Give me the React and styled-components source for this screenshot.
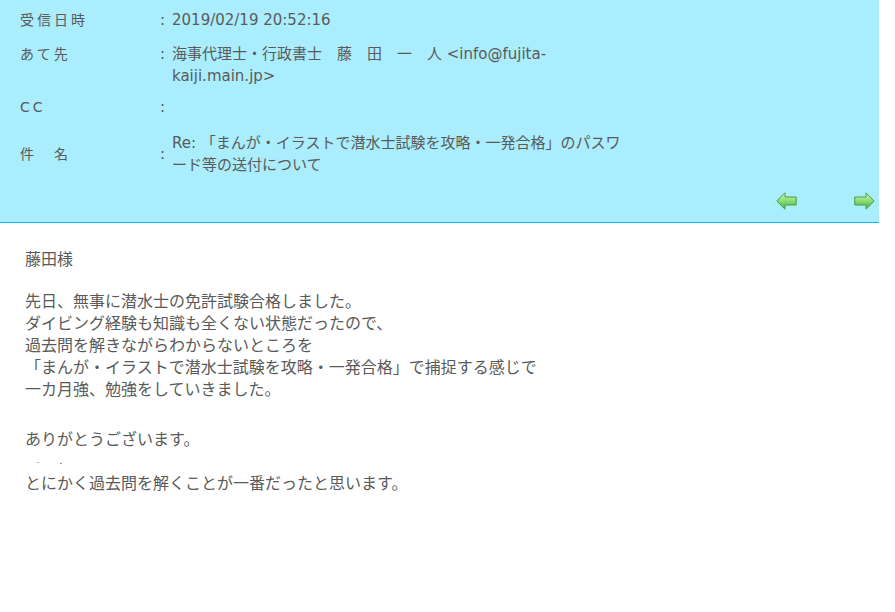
import React from 'react';
import styled, { createGlobalStyle } from 'styled-components';

const GlobalStyle = createGlobalStyle`
  body {
    margin: 0;
    background: #ffffff;
    font-family: "DejaVu Sans", "Noto Sans CJK JP", sans-serif;
    color: #5a5a5a;
  }
`;

const Header = styled.div`
  width: 879px;
  background: #aaedfd;
  border-bottom: 1px solid #10b9e2;
  padding-top: 9px;
  box-sizing: border-box;
  height: 223px;
`;

const Row = styled.div`
  display: grid;
  grid-template-columns: 140px 12px 458px;
  align-items: ${(p) => (p.$top_align ? 'start' : 'center')};
  padding-left: 20px;
  margin-top: ${(p) => p.$top || 0}px;
  line-height: 22px;
`;

const Label = styled.div`
  font-size: 14px;
  letter-spacing: 3px;
  white-space: nowrap;
`;

const Colon = styled.div`
  font-size: 15px;
`;

const Value = styled.div`
  font-size: 15px;
`;

const ArrowBar = styled.div`
  display: flex;
  justify-content: flex-end;
  gap: 57px;
  padding: 16px 4px 0 0;
`;

const Body = styled.div`
  padding: 26px 0 0 25px;
  font-size: 16px;
  line-height: 22px;
  color: #5a5a5a;
`;

const Para = styled.p`
  margin: ${(p) => p.$top || 0}px 0 0;
`;

const DotLine = styled.div`
  display: flex;
  height: 22px;
  align-items: center;
  padding-left: 12px;
  gap: 21px;
`;

const Dot = styled.span`
  width: 2px;
  height: 1px;
  background: ${(p) => p.$color};
  margin-top: ${(p) => p.$dy || 0}px;
`;

const Arrow = ({ dir }) => (
  <svg width="21" height="18" viewBox="0 0 21 18" style={{ transform: dir === 'right' ? 'scaleX(-1)' : 'none' }}>
    <defs>
      <linearGradient id={`g-${dir}`} x1="0" y1="0" x2="0" y2="1">
        <stop offset="0" stopColor="#d6f8c4" />
        <stop offset="0.45" stopColor="#8fe07a" />
        <stop offset="1" stopColor="#3fb53c" />
      </linearGradient>
    </defs>
    <polygon
      points="0.8,9 9,0.8 9,5 20.2,5 20.2,13 9,13 9,17.2"
      fill={`url(#g-${dir})`}
      stroke="#4b9a4b"
      strokeWidth="1"
      strokeLinejoin="round"
    />
  </svg>
);

export default function App() {
  return (
    <>
      <GlobalStyle />
      <Header>
        <Row>
          <Label>受信日時</Label>
          <Colon>:</Colon>
          <Value>2019/02/19 20:52:16</Value>
        </Row>
        <Row $top={12} $top_align>
          <Label>あて先</Label>
          <Colon>:</Colon>
          <Value>海事代理士・行政書士　藤　田　一　人 &lt;info@fujita-kaiji.main.jp&gt;</Value>
        </Row>
        <Row $top={9}>
          <Label>CC</Label>
          <Colon>:</Colon>
          <Value></Value>
        </Row>
        <Row $top={14}>
          <Label>件　名</Label>
          <Colon>:</Colon>
          <Value>Re: 「まんが・イラストで潜水士試験を攻略・一発合格」のパスワード等の送付について</Value>
        </Row>
        <ArrowBar>
          <Arrow dir="left" />
          <Arrow dir="right" />
        </ArrowBar>
      </Header>
      <Body>
        <Para>藤田様</Para>
        <Para $top={20}>
          先日、無事に潜水士の免許試験合格しました。<br />
          ダイビング経験も知識も全くない状態だったので、<br />
          過去問を解きながらわからないところを<br />
          「まんが・イラストで潜水士試験を攻略・一発合格」で捕捉する感じで<br />
          一カ月強、勉強をしていきました。
        </Para>
        <Para $top={28}>ありがとうございます。</Para>
        <DotLine>
          <Dot $color="#e0a060" />
          <Dot $color="#9a9a9a" $dy={3} />
        </DotLine>
        <Para>とにかく過去問を解くことが一番だったと思います。</Para>
      </Body>
    </>
  );
}
